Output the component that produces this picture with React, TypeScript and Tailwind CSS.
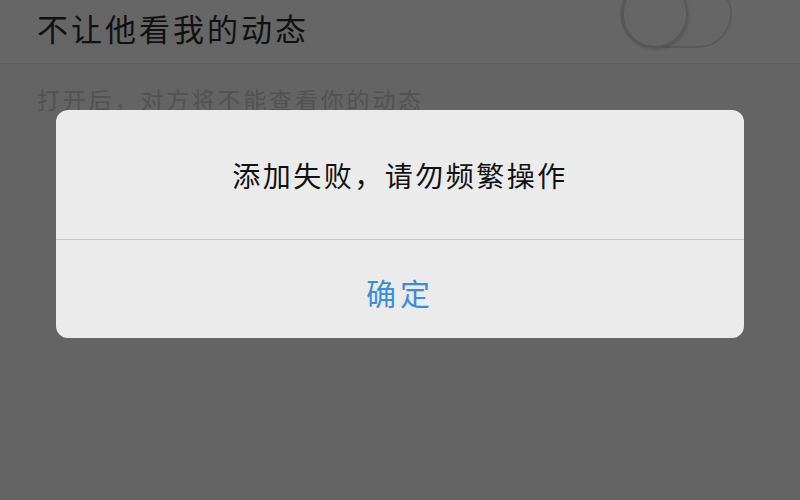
const cjk = "font-['Noto_Sans_CJK_SC','Noto_Sans',sans-serif]"

export default function App() {
    return (
        <div className={`relative w-[800px] h-[500px] overflow-hidden bg-[#646464] ${cjk}`}>
            {/* settings row */}
            <div className="flex items-center justify-between h-[64px] pl-[37px] pr-[68px] bg-[#666666] border-b border-[#5c5c5c]">
                <p className="text-[31px] tracking-[3px] text-[#111] leading-none -mt-[8px]">不让他看我的动态</p>
                <div className="relative w-[112px] h-[68px] -mt-[36px] rounded-full border-2 border-[#5a5a5a]">
                    <div className="absolute left-0 -top-[2px] w-[66px] h-[68px] rounded-full border-2 border-[#575757] shadow-[1px_2px_2px_rgba(0,0,0,0.12)]" />
                </div>
            </div>
            <p className="pl-[37px] pt-[24px] text-[23px] tracking-[2.8px] text-[#525252] leading-none">
                打开后，对方将不能查看你的动态
            </p>

            {/* alert dialog */}
            <div className="absolute left-[56px] top-[110px] w-[688px] h-[228px] rounded-[12px] bg-[#ebebeb] flex flex-col">
                <div className="h-[130px] flex items-center justify-center border-b border-[#c8c8c8]">
                    <p className="text-[28px] tracking-[2.5px] text-[#111] leading-none">添加失败，请勿频繁操作</p>
                </div>
                <div className="flex-1 flex items-center justify-center">
                    <p className="text-[30px] tracking-[4px] text-[#3a8ddb] leading-none pt-[6px]">确定</p>
                </div>
            </div>
        </div>
    )
}
